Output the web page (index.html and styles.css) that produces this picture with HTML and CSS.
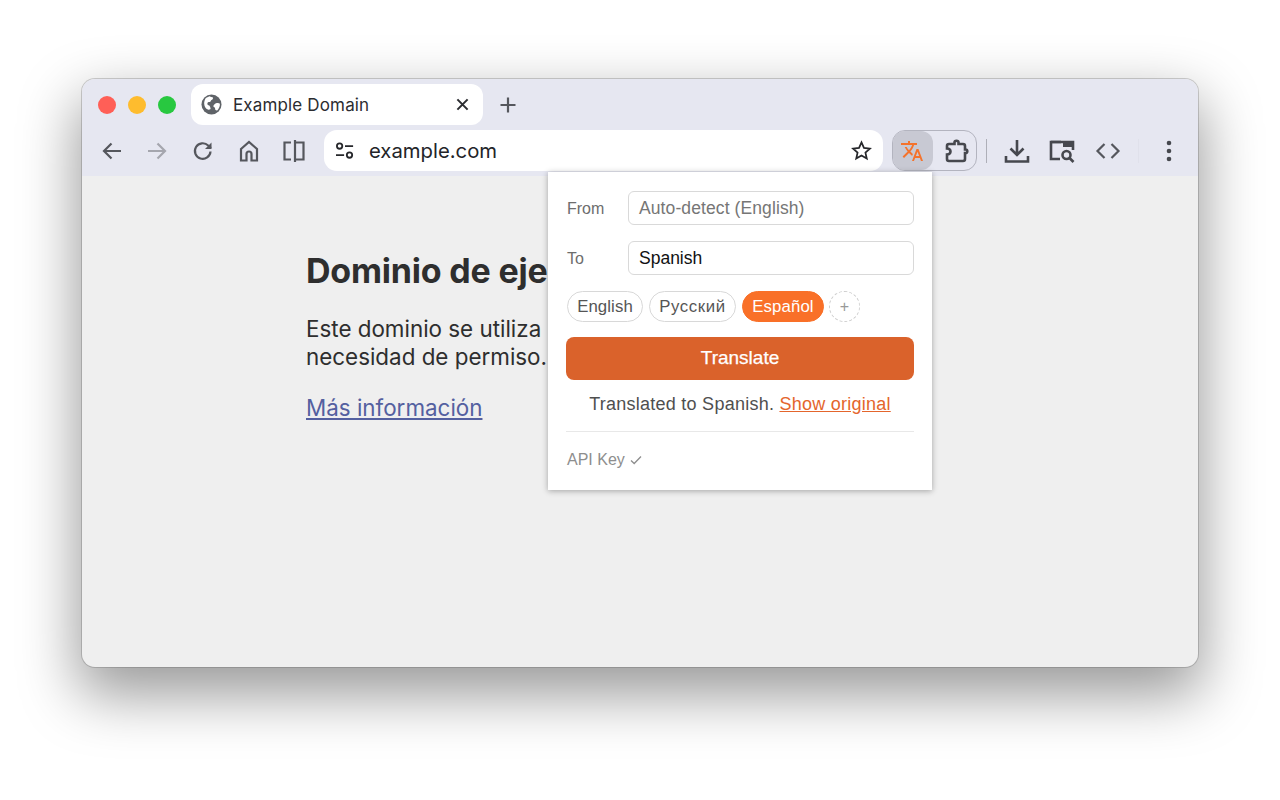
FILE: index.html
```html
<!DOCTYPE html>
<html lang="en">
<head>
<meta charset="utf-8">
<title>Example Domain</title>
<link rel="stylesheet" href="styles.css">
</head>
<body>
<div class="window">
  <div class="tabbar">
    <div class="lights"><span class="light red"></span><span class="light yellow"></span><span class="light green"></span></div>
    <div class="tab">
      <svg class="globe" viewBox="0 0 22 22"><circle cx="11" cy="11" r="10.500" fill="#5f6368"/><path d="M5 4.200 9 2.400c1.200.9 2.500 1 3.600 1.200.3 1.300-.6 2.300-1.700 2.700-.6.9-.8 1.700-1.800 2.100-1.300-.3-2.300.3-2.400 1.500-.2 1.300.8 2 2 2.100.8 1.100 1.300 2.200 1.400 3.600-.9.600-1.700.9-2.400.8C4.500 15.500 3.500 13 3.300 9.800 3.400 7.800 4 5.600 5 4.200zM16.500 9.500c1.400-.3 2.700 0 3.300.8.2 2.800-.9 5-2.800 6.900-1.400.3-2.200-.6-2.200-1.700 0-1.300-.8-1.700-1.800-2.200-.4-1.600 1.700-3.400 3.500-3.800z" fill="#fff"/></svg>
      <span class="tab-title">Example Domain</span>
      <svg class="tab-close" viewBox="0 0 14 14"><path d="M1.500 1.500l11 11M12.500 1.500l-11 11" stroke="#2b2c30" stroke-width="2.200" fill="none"/></svg>
    </div>
    <svg class="newtab" viewBox="0 0 16 16"><path d="M8 .5v15M.5 8h15" stroke="#55575d" stroke-width="2.200" fill="none"/></svg>
  </div>
  <div class="toolbar">
    <svg class="tool" viewBox="0 0 24 24"><path d="M21 12H4M11.500 4.500 4 12l7.500 7.500" class="ico"/></svg>
    <svg class="tool tool-gap" viewBox="0 0 24 24"><path d="M3 12h17M12.500 4.500 20 12l-7.500 7.500" class="ico ico-dim"/></svg>
    <svg class="tool tool-gap" viewBox="0 0 24 24"><path d="M19.500 12.500a7.800 7.800 0 1 1-2.300-6L20 9" class="ico"/><path d="M20.500 3.500v6.500h-6.500z" fill="#55575d"/></svg>
    <svg class="tool" viewBox="0 0 24 24"><path d="M4 10 12 3l8 7v11.500h-5.500V15a2.500 2.500 0 0 0-5 0v6.500H4z" class="ico"/></svg>
    <svg class="tool" viewBox="0 0 24 24"><path d="M9 3.500H2.500v17H9" class="ico"/><path d="M13 1v22M13 3.500h8.500v17H13" class="ico"/></svg>
    <div class="omnibox">
      <svg class="tune" viewBox="0 0 22 20"><circle cx="5" cy="4.500" r="3" class="ico ico-dark"/><path d="M11 4.500h9M1 14.500h9" class="ico ico-dark"/><circle cx="16" cy="14.500" r="3" class="ico ico-dark"/></svg>
      <span class="url">example.com</span>
      <svg class="star" viewBox="0 0 24 24"><path d="M12 2.800l2.800 6.300 6.800.7-5.100 4.600 1.500 6.700-6-3.500-6 3.500 1.500-6.700-5.100-4.600 6.800-.7z" class="ico ico-dark"/></svg>
    </div>
    <div class="ext-group">
      <div class="ext-active">
        <svg class="ext-translate" viewBox="0 0 24 24"><path d="M12.870 15.070l-2.540-2.510.03-.03c1.740-1.940 2.980-4.170 3.710-6.530H17V4h-7V2H8v2H1v1.990h11.170C11.500 7.920 10.440 9.750 9 11.350 8.070 10.320 7.300 9.190 6.690 8h-2c.73 1.630 1.730 3.170 2.980 4.560l-5.090 5.020L4 19l5-5 3.110 3.110.76-2.040zM18.500 10h-2L12 22h2l1.120-3h4.750L21 22h2l-4.500-12zm-2.620 7l1.620-4.330L19.120 17h-3.240z" fill="#f4732c"/></svg>
      </div>
      <svg class="ext-puzzle" viewBox="0 0 26 26"><path d="M5 6h5.500V4.500a2 1.800 0 0 1 4 0V6H19a2 2 0 0 1 2 2v3.500h.5a1.800 1.800 0 0 1 0 3.600H21V21a2 2 0 0 1-2 2H5a2 2 0 0 1-2-2v-4.500c2.500 0 3.500-1.500 3.500-3S5.500 10.500 3 10.500V8a2 2 0 0 1 2-2z" class="ico ico-bold"/></svg>
    </div>
    <span class="sep"></span>
    <svg class="tool tool-wide dl" viewBox="0 0 26 26"><path d="M13 2v15M6.500 10.500 13 17l6.500-6.500" class="ico ico-bold"/><path d="M2 18v5.500h22V18" class="ico ico-bold"/></svg>
    <svg class="tool tool-wide search" viewBox="0 0 26 26"><path d="M12 4H2v17h9" class="ico ico-bold"/><path d="M2 4h22v8" class="ico ico-bold"/><rect x="14" y="3" width="11" height="6" fill="#46484e"/><circle cx="17.500" cy="17" r="4" class="ico ico-bold"/><path d="M20.500 20l4 4" class="ico ico-bold"/></svg>
    <svg class="tool tool-wide code" viewBox="0 0 26 26"><path d="M9.500 6 2.500 13l7 7M16.500 6l7 7-7 7" class="ico"/></svg>
    <span class="sep sep-faint"></span>
    <svg class="tool kebab" viewBox="0 0 6 24"><circle cx="3" cy="4" r="2.300" fill="#46484e"/><circle cx="3" cy="12" r="2.300" fill="#46484e"/><circle cx="3" cy="20" r="2.300" fill="#46484e"/></svg>
  </div>
  <div class="content">
    <h1 class="title">Dominio de eje</h1>
    <p class="para">Este dominio se utiliza<br>necesidad de permiso.</p>
    <a class="more" href="#">Más información</a>
  </div>
  <div class="popup">
    <div class="field"><span class="field-label">From</span><span class="select select-muted">Auto-detect (English)</span></div>
    <div class="field"><span class="field-label">To</span><span class="select">Spanish</span></div>
    <div class="chips">
      <span class="chip chip-en">English</span>
      <span class="chip chip-ru">Русский</span>
      <span class="chip chip-on">Español</span>
      <span class="chip-add">+</span>
    </div>
    <button class="translate">Translate</button>
    <div class="status">Translated to Spanish. <a class="status-link" href="#">Show original</a></div>
    <div class="api">API Key <svg class="check" viewBox="0 0 12 10"><path d="M1 5.500 4.200 8.500 11 1.500" stroke="#8e8e8e" stroke-width="1.300" fill="none"/></svg></div>
  </div>
</div>
</body>
</html>
```
FILE: styles.css
```css
* { box-sizing: border-box; }
html, body { margin: 0; height: 100%; background: #fff; overflow: hidden; }
body { padding: 79px 82px 0; font-family: Inter, "Liberation Sans", sans-serif; }

.window {
  position: relative;
  width: 1116px;
  height: 588px;
  border-radius: 13px;
  background: #efefef;
  box-shadow: 0 0 0 1px rgba(90, 90, 90, .28), 0 24px 58px 4px rgba(0, 0, 0, .4);
  display: flex;
  flex-direction: column;
}

.tabbar {
  height: 50px;
  background: #e6e7f1;
  border-radius: 13px 13px 0 0;
  display: flex;
  align-items: flex-start;
}
.lights { display: flex; gap: 12px; padding: 17px 0 0 16px; width: 109px; flex: none; }
.light { width: 18px; height: 18px; border-radius: 50%; }
.red { background: #ff5f57; }
.yellow { background: #febc2e; }
.green { background: #28c840; }

.tab {
  margin-top: 5px;
  width: 292px;
  height: 41px;
  background: #fff;
  border-radius: 12px;
  display: flex;
  align-items: center;
  padding: 0 14px 0 10px;
  flex: none;
}
.globe { width: 21px; height: 21px; flex: none; }
.tab-title { margin-left: 11px; font-size: 17px; color: #2b2c30; flex: 1; letter-spacing: .15px; }
.tab-close { width: 13px; height: 13px; }
.newtab { width: 16px; height: 16px; margin: 18px 0 0 17px; }

.toolbar {
  height: 47px;
  background: #e6e7f1;
  display: flex;
  align-items: flex-start;
  padding: 1px 0 0 18px;
}
.tool { width: 24px; height: 24px; margin: 9px 21px 0 0; flex: none; }
.tool-gap { margin-right: 22px; }
.ico { fill: none; stroke: #55575d; stroke-width: 2.200; }
.ico-dim { stroke: #a5a6ae; }
.ico-dark { stroke: #26272b; stroke-width: 2; }
.ico-bold { stroke: #46484e; stroke-width: 2.600; }

.omnibox {
  width: 559px;
  height: 41px;
  margin-left: -3px;
  background: #fff;
  border-radius: 13px;
  display: flex;
  align-items: center;
  padding: 0 10px 0 11px;
  flex: none;
}
.tune { width: 20px; height: 18px; flex: none; }
.url { margin-left: 14px; font-size: 20.300px; color: #232428; flex: 1; }
.star { width: 21px; height: 21px; margin-right: 1px; }

.ext-group {
  width: 85px;
  height: 41px;
  margin-left: 9px;
  border: 1px solid #b3b4bf;
  border-radius: 13px;
  display: flex;
  align-items: center;
  flex: none;
}
.ext-active {
  width: 40px;
  height: 39px;
  background: #c8c9d3;
  border-radius: 12px;
  display: flex;
  align-items: center;
  justify-content: center;
}
.ext-translate { width: 24px; height: 24px; margin-right: 2px; }
.ext-puzzle { width: 26px; height: 26px; margin-left: 11px; }

.sep { width: 1px; height: 24px; background: #aeafb8; margin: 9px 0 0 9px; flex: none; }
.sep-faint { background: #e0e1eb; margin: 9px 0 0 0; }
.tool-wide { width: 26px; height: 26px; margin: 8px 19px 0 0; }
.dl { margin-left: 17px; }
.search { margin-right: 20px; }
.code { margin-right: 17px; }
.kebab { width: 6px; height: 24px; margin: 9px 0 0 27px; }

.content { flex: 1; padding: 76px 0 0 224px; color: #2e2e2e; }
.title { margin: 0 0 25px; font-size: 34px; line-height: 38px; font-weight: 700; letter-spacing: -.2px; }
.para { margin: 0 0 23px; font-size: 22.400px; line-height: 28px; }
.more { font-size: 22.400px; line-height: 28px; color: #5460a0; display: block; width: max-content; }

.popup {
  position: absolute;
  left: 466px;
  top: 93px;
  width: 384px;
  height: 318px;
  background: #fff;
  box-shadow: 0 1px 6px rgba(0, 0, 0, .32);
  padding: 19px 18px 0;
  font-family: "Liberation Sans", Arial, sans-serif;
}
.field { display: flex; align-items: center; height: 34px; margin-bottom: 16px; }
.field-label { width: 62px; padding: 2px 0 0 1px; font-size: 16px; color: #6d6d6d; flex: none; }
.select {
  flex: 1;
  height: 34px;
  border: 1px solid #d9d9d9;
  border-radius: 6px;
  padding: 0 10px;
  display: flex;
  align-items: center;
  font-size: 17.500px;
  color: #111;
}
.select-muted { color: #767676; letter-spacing: .1px; }

.chips { display: flex; align-items: center; gap: 6px; height: 31px; margin-left: 1px; }
.chip {
  height: 31px;
  border: 1px solid #d8d8d8;
  border-radius: 16px;
  font-size: 16.800px;
  letter-spacing: .1px;
  color: #555;
  display: flex;
  align-items: center;
  justify-content: center;
}
.chip-en { width: 76px; }
.chip-ru { width: 87px; letter-spacing: .6px; }
.chip-on { width: 82px; background: #f97028; border-color: #f97028; color: #fff; }
.chip-add {
  width: 31px;
  height: 31px;
  margin-left: -1px;
  border: 1px dashed #cfcfcf;
  border-radius: 50%;
  color: #999;
  font-size: 16px;
  display: flex;
  align-items: center;
  justify-content: center;
}

.translate {
  display: block;
  width: 100%;
  height: 43px;
  margin-top: 15px;
  padding-bottom: 2px;
  border: 0;
  border-radius: 8px;
  background: #da622b;
  color: #fff;
  font: 19px "Liberation Sans", Arial, sans-serif;
  -webkit-text-stroke: .25px #fff;
}
.status {
  height: 52px;
  padding-top: 13px;
  text-align: center;
  font-size: 18px;
  line-height: 22px;
  letter-spacing: .25px;
  color: #4f4f4f;
  border-bottom: 1px solid #e8e8e8;
}
.status-link { color: #e4652c; }
.api { margin-top: 18px; padding-left: 1px; font-size: 16px; line-height: 20px; color: #8e8e8e; display: flex; align-items: center; gap: 5px; }
.check { width: 12px; height: 10px; }
```
